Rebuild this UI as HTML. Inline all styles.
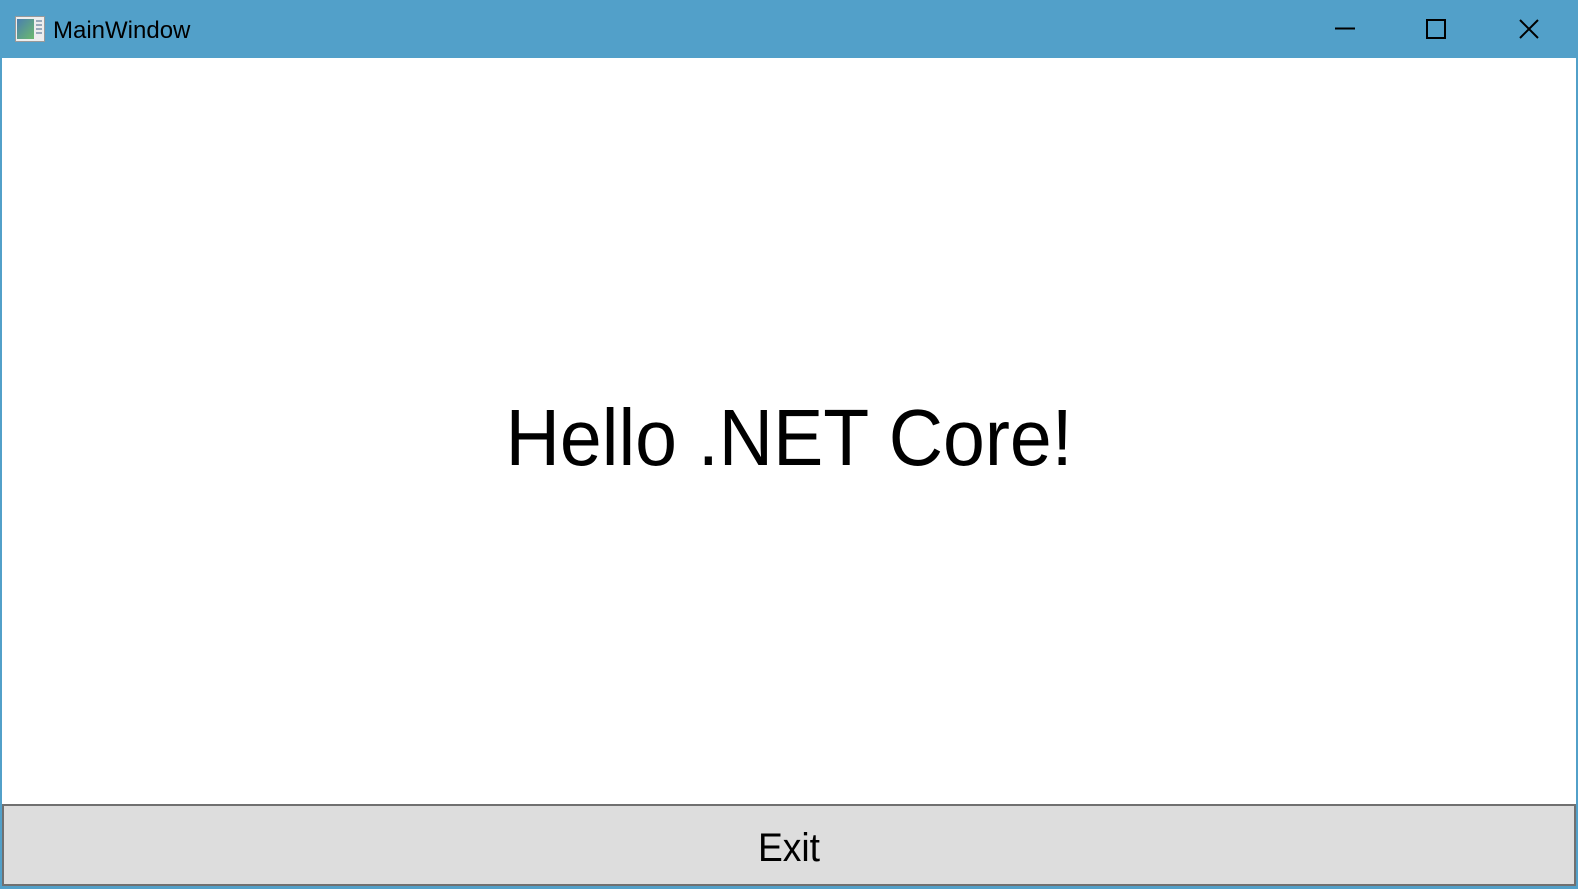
<!DOCTYPE html>
<html><head><style>
body{margin:0;width:1578px;height:889px;overflow:hidden;background:#52a0c9;position:relative;font-family:"Liberation Sans",sans-serif}
.client{position:absolute;left:2px;top:58px;width:1574px;height:828px;background:#fff}
.title{position:absolute;left:53px;top:17px;font-size:24px;color:#000}
.hello{position:absolute;left:0;width:1578px;top:388px;text-align:center;font-size:80px;line-height:100px;color:#000;transform:scaleX(0.94);transform-origin:791px 0}
.btn{position:absolute;left:2px;top:804px;width:1570px;height:78px;background:#dddddd;border:2px solid #707070}
.exit{position:absolute;left:0;width:100%;top:20px;text-align:center;font-size:40px;line-height:44px;transform:scaleX(0.93)}
</style></head><body>
<svg style="position:absolute;left:15px;top:16px" width="30" height="26" viewBox="0 0 30 26">
<rect x="0.5" y="0.5" width="29" height="25" fill="#eee" stroke="#999"/>
<defs><linearGradient id="g" x1="0" y1="0" x2="1" y2="1"><stop offset="0" stop-color="#4a7fb0"/><stop offset="1" stop-color="#6cba6c"/></linearGradient></defs>
<rect x="2" y="3" width="17" height="20" fill="url(#g)"/>
<rect x="21" y="4" width="6" height="2" fill="#9ab"/><rect x="21" y="8" width="6" height="2" fill="#9ab"/><rect x="21" y="12" width="6" height="2" fill="#9ab"/><rect x="21" y="16" width="6" height="2" fill="#9ab"/>
</svg>
<div class="title">MainWindow</div>
<svg style="position:absolute;left:1300px;top:0" width="278" height="58">
<line x1="35" y1="28.5" x2="55" y2="28.5" stroke="#000" stroke-width="2"/>
<rect x="127" y="20" width="18" height="18" fill="none" stroke="#000" stroke-width="2"/>
<path d="M220 20 L238 38 M238 20 L220 38" stroke="#000" stroke-width="2"/>
</svg>
<div class="client"></div>
<div class="hello">Hello .NET Core!</div>
<div class="btn"><div class="exit">Exit</div></div>
</body></html>
